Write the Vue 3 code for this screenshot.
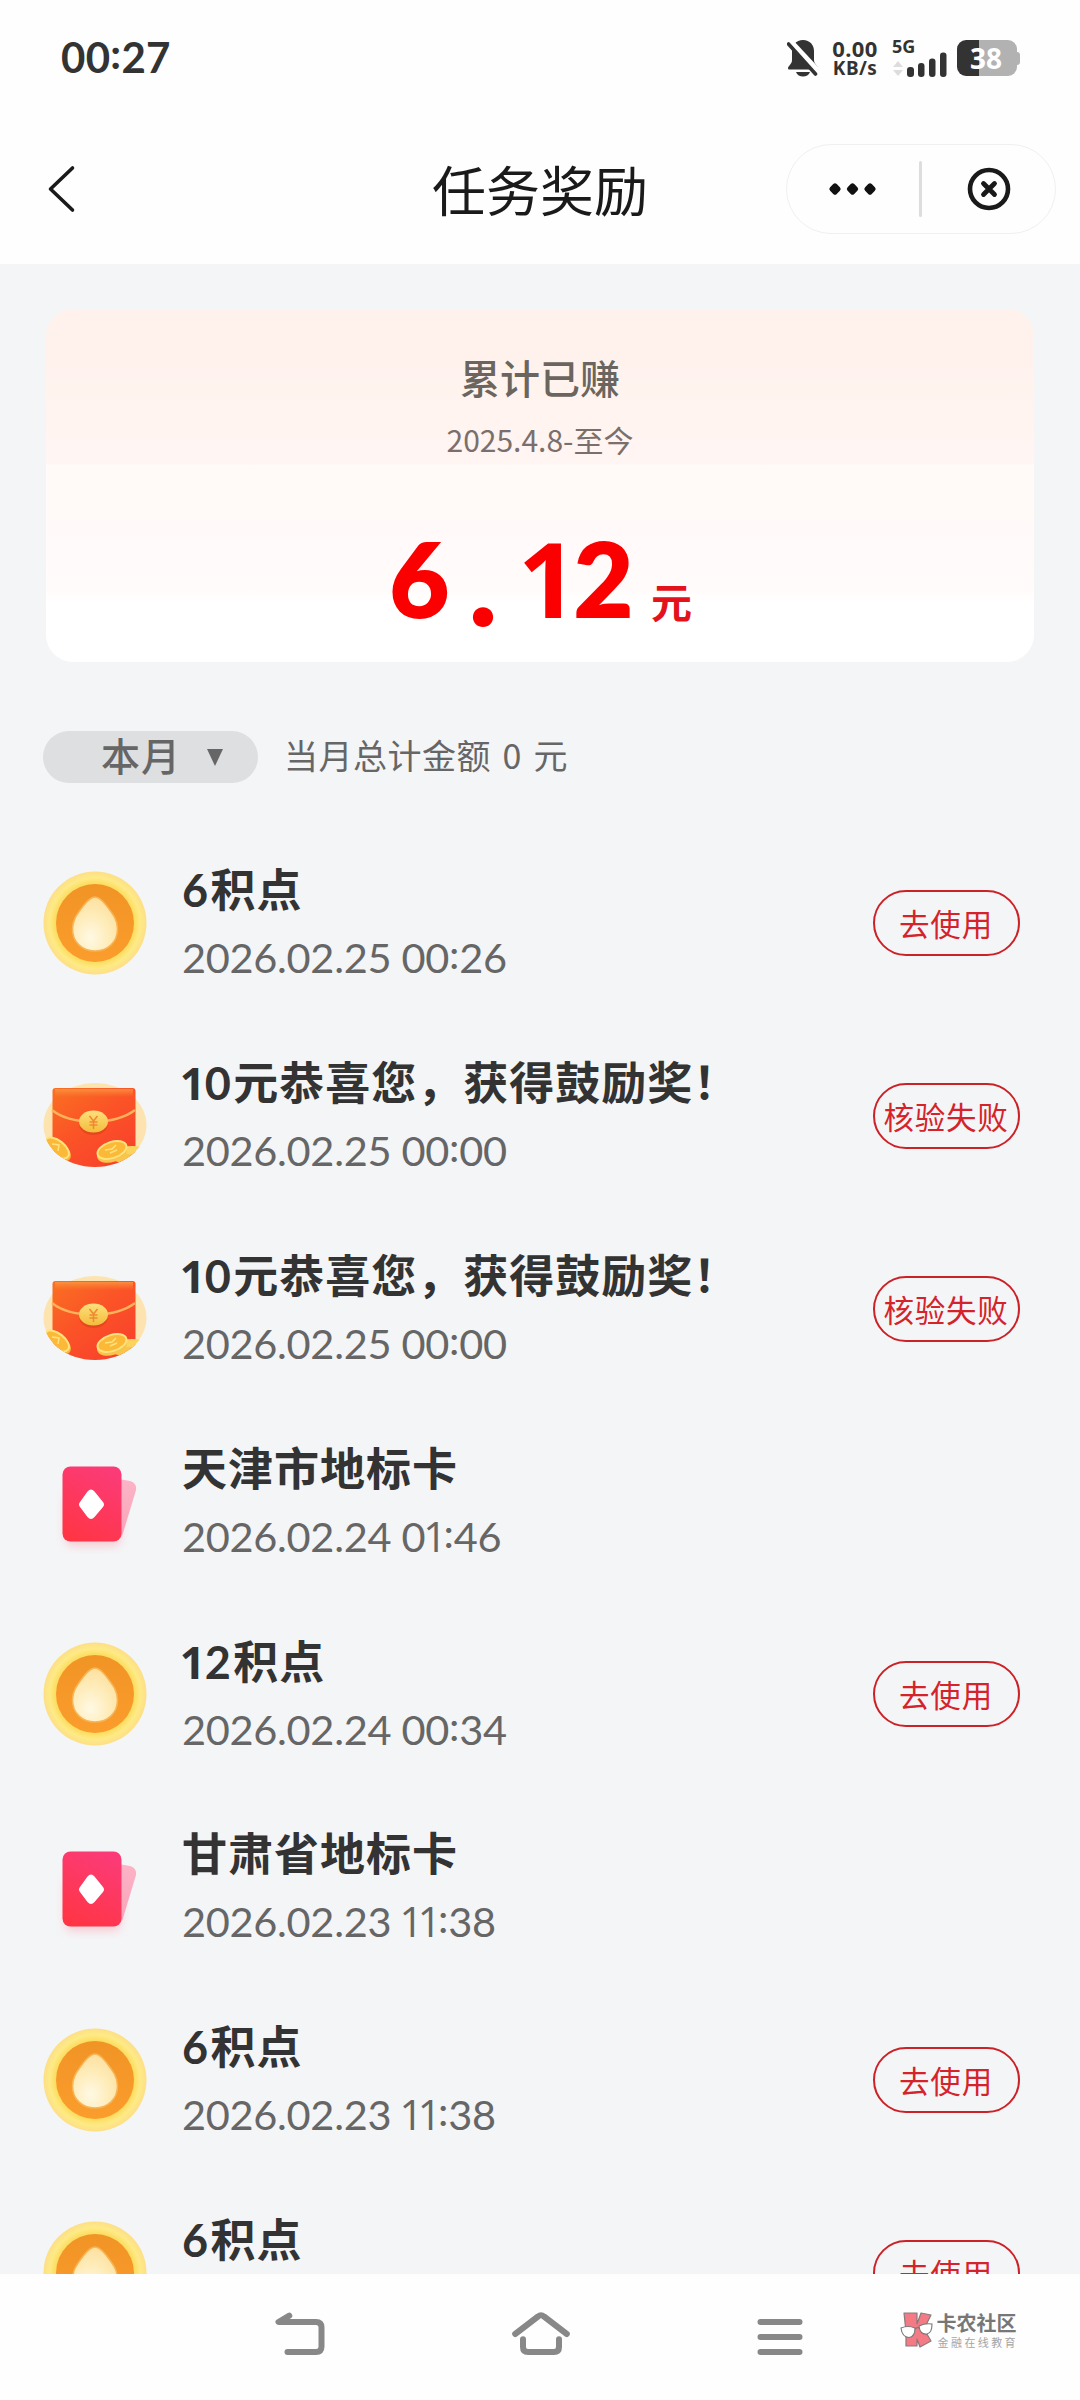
<script setup>
const rewards = [
  { kind: 'coin', title: '6积点', time: '2026.02.25 00:26', action: '去使用' },
  { kind: 'packet', title: '10元恭喜您，获得鼓励奖！', time: '2026.02.25 00:00', action: '核验失败' },
  { kind: 'packet', title: '10元恭喜您，获得鼓励奖！', time: '2026.02.25 00:00', action: '核验失败' },
  { kind: 'card', title: '天津市地标卡', time: '2026.02.24 01:46', action: '' },
  { kind: 'coin', title: '12积点', time: '2026.02.24 00:34', action: '去使用' },
  { kind: 'card', title: '甘肃省地标卡', time: '2026.02.23 11:38', action: '' },
  { kind: 'coin', title: '6积点', time: '2026.02.23 11:38', action: '去使用' },
  { kind: 'coin', title: '6积点', time: '', action: '去使用' },
]

// The digit one and the colon get their own glyph styling
const runs = (text) => text.split(/([1:]|[02-9]+)/).filter(Boolean)
const runClass = (run) => ({ one: run === '1', colon: run === ':', num: /\d/.test(run) })
</script>

<template>
  <div class="page">
    <header class="status">
      <div class="clock"><span v-for="(r, i) in runs('00:27')" :key="i" :class="runClass(r)">{{ r }}</span></div>
      <div class="indicators">
        <svg class="bell" width="32" height="38" viewBox="0 0 32 38">
          <path d="M16 1C9 1 5 6 5 12v9c0 4-4 6-4 8 0 1 .5 1.500 1.500 1.500h27c1 0 1.500-.5 1.500-1.500 0-2-4-4-4-8v-9C27 6 23 1 16 1z" fill="#333" />
          <path d="M9 33h14c-1 3-4 4.500-7 4.500S10 36 9 33z" fill="#333" />
          <path d="M2.500 2.500L31 33" stroke="#fff" stroke-width="7" />
          <path d="M1.500 5L28.500 35" stroke="#333" stroke-width="3.600" stroke-linecap="round" />
        </svg>
        <div class="speed"><span>0.00</span><span class="unit">KB/s</span></div>
        <div class="cell">
          <span class="gen">5G</span>
          <svg width="56" height="25" viewBox="0 0 56 25">
            <path d="M1 11L6 5l5 6zM1 14l5 6 5-6z" transform="translate(0 4)" fill="#ddd" />
            <rect x="15" y="15" width="7" height="10" rx="3" fill="#333" />
            <rect x="26" y="11" width="6.500" height="14" rx="3" fill="#333" />
            <rect x="37" y="6.500" width="6.500" height="18.500" rx="3" fill="#333" />
            <rect x="48" y="0.500" width="6.500" height="24.500" rx="3" fill="#333" />
          </svg>
        </div>
        <div class="battery"><div class="level">38</div><i class="nub"></i></div>
      </div>
    </header>

    <nav class="topbar">
      <svg class="back" width="30" height="50" viewBox="0 0 30 50">
        <path d="M25.500 4L3.500 25l22 21" fill="none" stroke="#1a1a1a" stroke-width="3.600" stroke-linecap="round" stroke-linejoin="round" />
      </svg>
      <h1>任务奖励</h1>
      <div class="capsule">
        <svg width="268" height="88" viewBox="0 0 268 88">
          <g fill="#111">
            <rect x="-4.700" y="-4.700" width="9.400" height="9.400" rx="2.500" transform="translate(48 44) rotate(45)" />
            <rect x="-4.700" y="-4.700" width="9.400" height="9.400" rx="2.500" transform="translate(65.500 44) rotate(45)" />
            <rect x="-4.700" y="-4.700" width="9.400" height="9.400" rx="2.500" transform="translate(83 44) rotate(45)" />
          </g>
          <rect x="132" y="16" width="3" height="56" rx="1.500" fill="#ddd" />
          <circle cx="202" cy="44" r="19" fill="none" stroke="#1a1a1a" stroke-width="4.600" />
          <path d="M196.500 38.500l11 11M207.500 38.500l-11 11" stroke="#1a1a1a" stroke-width="4.800" stroke-linecap="round" />
        </svg>
      </div>
    </nav>

    <main>
      <section class="total">
        <div class="label">累计已赚</div>
        <div class="since">2025.4.8-至今</div>
        <div class="amount">
          <div class="figure"><span>6</span><span class="dot">.</span><span class="one">1</span><span>2</span></div>
          <span class="yuan">元</span>
        </div>
      </section>

      <section class="filter">
        <div class="month">
          <span>本月</span>
          <svg width="16" height="17" viewBox="0 0 16 17"><path d="M0 0h16L8 17z" fill="#666" /></svg>
        </div>
        <div class="sum">当月总计金额 0 元</div>
      </section>

      <ul>
        <li v-for="(item, n) in rewards" :key="n">
          <svg v-if="item.kind === 'coin'" class="icon" viewBox="0 0 104 104">
            <defs>
              <radialGradient :id="'rim' + n" cx=".5" cy=".5" r=".5">
                <stop offset=".75" stop-color="#fbdb5c" /><stop offset=".88" stop-color="#feea86" /><stop offset="1" stop-color="#fddf86" />
              </radialGradient>
              <radialGradient :id="'drop' + n" cx=".4" cy=".75" r=".75">
                <stop offset="0" stop-color="#fff9e4" /><stop offset=".6" stop-color="#feebb6" /><stop offset="1" stop-color="#fde0a0" />
              </radialGradient>
              <linearGradient :id="'face' + n" x1="0" y1="0" x2="0" y2="1">
                <stop offset="0" stop-color="#f19426" /><stop offset="1" stop-color="#fa9d2c" />
              </linearGradient>
            </defs>
            <circle cx="52" cy="52" r="51.500" :fill="'url(#rim' + n + ')'" />
            <circle cx="52" cy="52" r="39" :fill="'url(#face' + n + ')'" />
            <path d="M52 26c4 0 7 3 11 8 6 8 11.500 14 11.500 24C74.500 71 65 80 52 80S29.500 71 29.500 58c0-10 5.500-16 11.500-24 4-5 7-8 11-8z" :fill="'url(#drop' + n + ')'" stroke="#f8b353" stroke-width="1.500" />
          </svg>

          <svg v-else-if="item.kind === 'packet'" class="icon" viewBox="0 0 104 104">
            <defs>
              <linearGradient :id="'pk' + n" x1="0" y1="0" x2=".75" y2="1">
                <stop offset="0" stop-color="#fa7022" /><stop offset=".5" stop-color="#fb5327" /><stop offset="1" stop-color="#f8412c" />
              </linearGradient>
              <linearGradient :id="'gold' + n" x1="0" y1="0" x2="0" y2="1">
                <stop offset="0" stop-color="#fde07c" /><stop offset="1" stop-color="#f3bc3c" />
              </linearGradient>
              <linearGradient :id="'lip' + n" x1="0" y1="0" x2="0" y2="1">
                <stop offset="0" stop-color="#fb9a45" stop-opacity=".8" /><stop offset="1" stop-color="#fb8a36" stop-opacity="0" />
              </linearGradient>
              <clipPath :id="'oval' + n"><ellipse cx="52" cy="61" rx="52" ry="42" /></clipPath>
              <clipPath :id="'body' + n"><path d="M0 23h104v38c0 23-23 42-52 42S0 84 0 61z" /></clipPath>
            </defs>
            <ellipse cx="52" cy="61" rx="51.500" ry="42" fill="#fde3b0" />
            <g :clip-path="'url(#body' + n + ')'">
              <path d="M9.500 104V27q0-3 3-3h77q3 0 3 3v77z" :fill="'url(#pk' + n + ')'" />
              <path d="M12 25h78v8H12z" :fill="'url(#lip' + n + ')'" />
            </g>
            <path d="M9 46c10 8 22 11 42 12 20-1 32-5 41-12" fill="none" stroke="#fcb25a" stroke-width="2.400" />
            <ellipse cx="50.500" cy="60" rx="14.500" ry="11" fill="#d9401c" opacity=".6" />
            <ellipse cx="50.500" cy="57.500" rx="14.500" ry="11" :fill="'url(#gold' + n + ')'" />
            <path d="M46.500 52l4 5 4-5M50.500 57v8M46.500 58h8M46.500 61h8" fill="none" stroke="#ee8a30" stroke-width="1.500" />
            <g :clip-path="'url(#oval' + n + ')'">
              <ellipse cx="15" cy="86" rx="15" ry="8.500" transform="rotate(38 15 86)" fill="#f6b23a" />
              <ellipse cx="14" cy="84" rx="14" ry="7.500" transform="rotate(38 14 84)" fill="#fcb938" stroke="#fde27e" stroke-width="2" />
              <path d="M9 80l7 1-1 6" fill="none" stroke="#fde27e" stroke-width="1.500" />
              <ellipse cx="83" cy="93" rx="15" ry="6" fill="#f9c64c" />
              <ellipse cx="89" cy="86" rx="14" ry="4" fill="#fbd460" />
              <ellipse cx="69" cy="89" rx="15.500" ry="9" transform="rotate(-18 69 89)" fill="#f8c44a" />
              <ellipse cx="69" cy="86" rx="15" ry="8" transform="rotate(-18 69 86)" fill="#fcb938" stroke="#fde27e" stroke-width="2" />
              <path d="M62 86l7-1 4-4M67 89l7-3" fill="none" stroke="#fde27e" stroke-width="1.500" />
            </g>
          </svg>

          <svg v-else class="icon" viewBox="0 0 104 104">
            <defs>
              <linearGradient :id="'cd' + n" x1=".7" y1="0" x2=".3" y2="1">
                <stop offset="0" stop-color="#fb3b78" /><stop offset="1" stop-color="#ff3545" />
              </linearGradient>
              <linearGradient :id="'cs' + n" x1="0" y1="0" x2="0" y2="1">
                <stop offset="0" stop-color="#fcb4c6" /><stop offset="1" stop-color="#fba3b8" />
              </linearGradient>
              <filter :id="'bl' + n" x="-.3" y="-.3" width="1.600" height="1.600"><feGaussianBlur stdDeviation="5" /></filter>
            </defs>
            <rect x="22" y="44" width="56" height="52" rx="8" fill="#f9a0ae" opacity=".5" :filter="'url(#bl' + n + ')'" />
            <path d="M70 28l17 3q7 2 6 9L80 83q-1 5-8 7z" :fill="'url(#cs' + n + ')'" />
            <rect x="19.500" y="16.500" width="59" height="75" rx="8" :fill="'url(#cd' + n + ')'" />
            <path d="M44.500 41.500q3.500-4 7 0l8.500 10.500q2 2.500 0 5L51.500 67q-3.500 4-7 0L37 57q-2-2.500 0-5z" fill="#fff" />
          </svg>

          <div class="info">
            <div class="title"><span v-for="(r, i) in runs(item.title)" :key="i" :class="runClass(r)">{{ r }}</span></div>
            <div class="time"><span v-for="(r, i) in runs(item.time)" :key="i" :class="runClass(r)">{{ r }}</span></div>
          </div>
          <button v-if="item.action">{{ item.action }}</button>
        </li>
      </ul>
    </main>

    <footer>
      <div class="keys">
        <svg width="50" height="48" viewBox="0 0 50 48">
          <path d="M14.300 5.700L3.500 12H41q5.500 0 5.500 5.500V36.500q0 5.500-5.500 5.500H12.500" />
        </svg>
        <svg width="60" height="48" viewBox="0 0 60 48">
          <path d="M4.200 24L27 6.500q3-2.500 6 0L55.800 24M12 29.300V37q0 5 5 5H43q5 0 5-5V29.300" />
        </svg>
        <svg width="48" height="48" viewBox="0 0 48 48"><path d="M4.500 12h39M4.500 27h39M4.500 42h39" /></svg>
      </div>
      <div class="mark">
        <svg width="36" height="36" viewBox="0 0 36 36">
          <g fill="#f47b86" stroke="#8a7a7c" stroke-width="1.200" stroke-linejoin="round">
            <path d="M5 1h13v11l4-11 10 2-7 14 7 12-11 6-3-8v7H7V20z" />
          </g>
          <g fill="#fff" stroke="#777" stroke-width="1.100">
            <path d="M2 16q7-3 14 0 0 9-6 9.500Q3 25 2 16zM20 14q6-3 13-2 0 9-5 10-7 1-8-8z" />
            <path d="M16 17q2-2 4-1" fill="none" />
          </g>
        </svg>
        <div class="words"><b>卡农社区</b><span>金融在线教育</span></div>
      </div>
    </footer>
  </div>
</template>

<style>
body { background: #fff; }
</style>

<style scoped>
* { box-sizing: border-box; }
.page {
  width: 1080px; height: 2400px; display: flex; flex-direction: column; overflow: hidden;
  background: #fefefe; color: #333; font-family: "Noto Sans CJK SC", sans-serif; white-space: nowrap;
}
.one { font-family: "Open Sans", sans-serif; font-size: .99em; margin: 0 -.07em 0 -.05em; }
.colon { vertical-align: .09em; line-height: 0; }

.status { height: 114px; padding: 0 60px 0 61px; display: flex; justify-content: space-between; align-items: center; }
.clock { font: 700 42px/60px Lato, sans-serif; letter-spacing: .3px; }
.indicators { display: flex; align-items: center; height: 38px; padding-top: 2px; }
.bell { margin-right: 11px; }
.speed { width: 50px; display: flex; flex-direction: column; align-items: center; font: 700 22px/20px "Noto Sans", sans-serif; }
.speed span { letter-spacing: .4px; }
.speed .unit { font-size: 19px; line-height: 20px; }
.cell { width: 56px; margin-left: 12px; display: flex; flex-direction: column; }
.gen { font: 700 18px/12px "Noto Sans", sans-serif; }
.battery { display: flex; align-items: center; margin-left: 9px; }
.level {
  width: 60px; height: 36px; border-radius: 9px; text-align: center; color: #fff;
  background: linear-gradient(90deg, #333 22px, #b2b2b2 22px); font: 700 28px/37px "Noto Sans", sans-serif; text-indent: -2px;
}
.nub { width: 3px; height: 13px; background: #b2b2b2; border-radius: 0 3px 3px 0; }

.topbar { height: 150px; padding: 0 24px 0 47px; display: grid; grid-template-columns: 1fr auto 1fr; align-items: center; }
.topbar h1 { margin: 0 23px 0 0; font-size: 54px; line-height: 70px; font-weight: 400; color: #1a1a1a; }
.capsule { justify-self: end; width: 270px; height: 90px; border: 1px solid #f0f0f0; border-radius: 45px; }
.capsule svg { display: block; }

main { height: 2010px; overflow: hidden; background: #f4f5f7; padding-top: 45px; }
.total {
  width: 988px; height: 353px; margin: 0 auto; border-radius: 27px; padding-top: 42px;
  background: linear-gradient(#fff1eb 0, #fff5f2 43.500%, #fffaf8 44.500%, #fffbfa 79%, #fff 83%);
  display: flex; flex-direction: column; align-items: center;
}
.label { font-size: 40px; line-height: 52px; font-weight: 500; color: #6b6560; }
.since { margin-top: 16px; font-size: 30px; line-height: 40px; color: #7a6f6d; }
.amount { margin-top: 69px; padding-left: 1px; display: flex; align-items: flex-end; color: #fb0000; }
.figure { display: grid; grid-template-columns: 61px 66px 57px 61px; font: 800 104px/100px Lato, sans-serif; text-align: center; }
.figure .dot { font-weight: 900; font-size: 124px; }
.figure .one { font: 700 104px/100px "Open Sans", sans-serif; margin: 0; padding-left: 2px; }
.yuan { margin-left: 17px; font-size: 41px; line-height: 60px; margin-bottom: -2px; font-weight: 700; color: #e3131b; }

.filter { margin: 69px 0 0 43px; height: 52px; display: flex; align-items: center; }
.month { width: 215px; height: 52px; border-radius: 26px; background: #dedfe0; padding-left: 58px; display: flex; align-items: center; color: #666; }
.month span { font-size: 39px; line-height: 48px; font-weight: 500; letter-spacing: 1px; margin: -6px 26px 0 0; }
.sum { margin: -5px 0 0 26px; font-size: 34px; line-height: 46px; letter-spacing: .5px; word-spacing: 3.500px; color: #666; }

ul { list-style: none; margin: 43.500px 0 0; padding: 0 60px 0 43px; }
li { height: 192.860px; display: flex; align-items: center; }
.icon { width: 104px; height: 104px; flex: none; }
.info { flex: 1; margin-left: 35px; }
.title { font: 700 45px/69px Lato, "Noto Sans CJK SC", sans-serif; letter-spacing: 1px; padding-top: 2px; margin-bottom: -2px; }
.title .num { letter-spacing: 2.500px; }
.time { height: 69px; font: 400 41.500px/69px Lato, sans-serif; letter-spacing: -.3px; color: #666; }
button {
  width: 147px; height: 66px; padding: 0; border: 2px solid #cb2228; border-radius: 33px; background: none; color: #d5232b;
  font: 400 30.500px/58px "Noto Sans CJK SC", sans-serif; letter-spacing: .8px; text-indent: -1px; white-space: nowrap;
}

footer { flex: 1; display: flex; padding: 36px 62px 0 275px; justify-content: space-between; background: #fefefe; }
.keys { width: 529px; display: flex; justify-content: space-between; }
.keys svg { fill: none; stroke: #888; stroke-width: 6; stroke-linecap: round; stroke-linejoin: round; }
.mark { display: flex; gap: 2px; padding-top: 2px; }
.words { display: flex; flex-direction: column; color: #777; padding-top: 1px; }
.words b { font-size: 20px; line-height: 20px; font-weight: 700; }
.words span { font-size: 11px; line-height: 14px; letter-spacing: 2.400px; color: #a5a5a5; margin: 2px 0 0 1px; }
</style>
